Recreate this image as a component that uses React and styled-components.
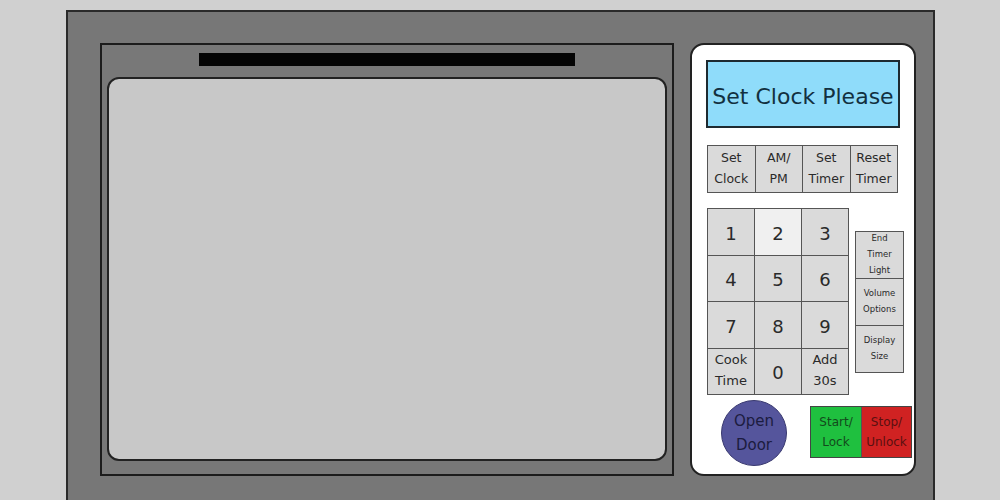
import React from 'react';
import styled, { createGlobalStyle } from 'styled-components';

const GlobalStyle = createGlobalStyle`
  html, body {
    margin: 0;
    padding: 0;
    background: #d0d0d0;
    overflow: hidden;
  }
  body {
    font-family: "DejaVu Sans", "Liberation Sans", sans-serif;
  }
`;

const Page = styled.div`
  width: 1000px;
  height: 500px;
  padding: 10px 0 0 66px;
  box-sizing: border-box;
`;

const Body = styled.div`
  width: 869px;
  height: 490px;
  box-sizing: border-box;
  background: #777777;
  border: 2px solid #2a2a2a;
  border-bottom: none;
  padding: 31px 0 0 32px;
  display: flex;
  align-items: flex-start;
  gap: 16px;
`;

const Door = styled.div`
  width: 574px;
  height: 433px;
  box-sizing: border-box;
  border: 2px solid #1c1c1c;
  background: #787878;
  padding: 8px 5px 0;
  display: flex;
  flex-direction: column;
  align-items: center;
`;

const Slot = styled.div`
  width: 376px;
  height: 13px;
  background: #050505;
`;

const Window = styled.div`
  margin-top: 11px;
  width: 560px;
  height: 384px;
  box-sizing: border-box;
  background: #c8c8c8;
  border: 2px solid #222;
  border-radius: 12px;
`;

const Panel = styled.div`
  width: 226px;
  height: 433px;
  box-sizing: border-box;
  background: #ffffff;
  border: 2px solid #222;
  border-radius: 14px;
  padding: 15px 14px 0;
  display: flex;
  flex-direction: column;
`;

const Display = styled.div`
  height: 68px;
  box-sizing: border-box;
  background: #8fdcfa;
  border: 2px solid #1e2a30;
  display: flex;
  align-items: center;
  justify-content: center;
  padding-top: 5px;
  font-size: 22px;
  color: #123040;
`;

const TopRow = styled.div`
  margin: 17px 0 0 1px;
  display: grid;
  grid-template-columns: repeat(4, 1fr);
  height: 48px;
  width: 191px;
  box-sizing: border-box;
  border: 1px solid #555;
  background: #555;
  gap: 1px;
`;

const Key = styled.div`
  background: ${props => (props.$light ? '#f0f0f0' : '#dadada')};
  color: #2a2a2a;
  font-size: ${props => props.$size || 13}px;
  line-height: ${props => props.$lh || 1.5};
  padding-top: ${props => props.$pt || 0}px;
  display: flex;
  align-items: center;
  justify-content: center;
  text-align: center;
`;

const KeyArea = styled.div`
  margin-top: 15px;
  display: flex;
  align-items: flex-start;
`;

const Keypad = styled.div`
  margin-left: 1px;
  display: grid;
  grid-template-columns: repeat(3, 46px);
  grid-template-rows: repeat(4, 45.5px);
  gap: 1px;
  border: 1px solid #555;
  background: #555;
`;

const SideKeys = styled.div`
  margin: 23px 0 0 6px;
  display: grid;
  grid-template-columns: 47px;
  grid-template-rows: repeat(3, 46px);
  gap: 1px;
  border: 1px solid #555;
  background: #555;
`;

const BottomRow = styled.div`
  display: flex;
  align-items: flex-start;
`;

const DoorButton = styled.div`
  flex-shrink: 0;
  margin: 5px 0 0 15px;
  width: 66px;
  height: 66px;
  box-sizing: border-box;
  border-radius: 50%;
  background: #55559c;
  border: 1px solid #3a3a70;
  color: #1c1c40;
  font-size: 15px;
  line-height: 1.6;
  display: flex;
  align-items: center;
  justify-content: center;
  text-align: center;
`;

const ActionGroup = styled.div`
  flex-shrink: 0;
  margin: 11px 0 0 23px;
  display: grid;
  grid-template-columns: repeat(2, 50px);
  height: 50px;
  border: 1px solid #444;
`;

const Action = styled.div`
  background: ${props => props.$bg};
  color: ${props => props.$fg};
  font-size: 12px;
  line-height: 1.7;
  display: flex;
  align-items: center;
  justify-content: center;
  text-align: center;
  & + & {
    border-left: 1px solid #555;
  }
`;

const topKeys = [
  ['Set', 'Clock'],
  ['AM/', 'PM'],
  ['Set', 'Timer'],
  ['Reset', 'Timer'],
];

const pad = [
  { label: ['1'] },
  { label: ['2'], light: true },
  { label: ['3'] },
  { label: ['4'] },
  { label: ['5'] },
  { label: ['6'] },
  { label: ['7'] },
  { label: ['8'] },
  { label: ['9'] },
  { label: ['Cook', 'Time'], small: true },
  { label: ['0'] },
  { label: ['Add', '30s'], small: true },
];

const sideKeys = [
  ['End', 'Timer', 'Light'],
  ['Volume', 'Options'],
  ['Display', 'Size'],
];

const lines = parts => parts.map((p, i) => (
  <React.Fragment key={i}>
    {i > 0 && <br />}
    {p}
  </React.Fragment>
));

export default function App() {
  return (
    <>
      <GlobalStyle />
      <Page>
        <Body>
          <Door>
            <Slot />
            <Window />
          </Door>
          <Panel>
            <Display>Set Clock Please</Display>
            <TopRow>
              {topKeys.map((k, i) => (
                <Key key={i} $size={12.5} $lh={1.65}>{lines(k)}</Key>
              ))}
            </TopRow>
            <KeyArea>
              <Keypad>
                {pad.map((k, i) => (
                  <Key
                    key={i}
                    $light={k.light}
                    $size={k.small ? 13 : 18}
                    $lh={k.small ? 1.6 : 1}
                    $pt={k.small ? 0 : 4}
                  >
                    {lines(k.label)}
                  </Key>
                ))}
              </Keypad>
              <SideKeys>
                {sideKeys.map((k, i) => (
                  <Key key={i} $size={8.5} $lh={1.85}>{lines(k)}</Key>
                ))}
              </SideKeys>
            </KeyArea>
            <BottomRow>
              <DoorButton>{lines(['Open', 'Door'])}</DoorButton>
              <ActionGroup>
                <Action $bg="#1fc03f" $fg="#134a1c">{lines(['Start/', 'Lock'])}</Action>
                <Action $bg="#d02222" $fg="#5a1010">{lines(['Stop/', 'Unlock'])}</Action>
              </ActionGroup>
            </BottomRow>
          </Panel>
        </Body>
      </Page>
    </>
  );
}
